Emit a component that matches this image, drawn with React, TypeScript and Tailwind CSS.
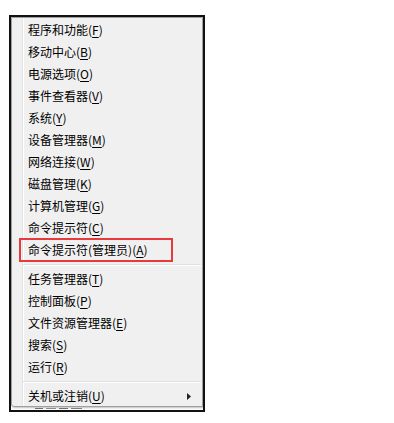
import React from 'react';

type Item = { label: string; key: string; highlight?: boolean; arrow?: boolean };

const groups: Item[][] = [
  [
    { label: '程序和功能', key: 'F' },
    { label: '移动中心', key: 'B' },
    { label: '电源选项', key: 'O' },
    { label: '事件查看器', key: 'V' },
    { label: '系统', key: 'Y' },
    { label: '设备管理器', key: 'M' },
    { label: '网络连接', key: 'W' },
    { label: '磁盘管理', key: 'K' },
    { label: '计算机管理', key: 'G' },
    { label: '命令提示符', key: 'C' },
    { label: '命令提示符(管理员)', key: 'A', highlight: true },
  ],
  [
    { label: '任务管理器', key: 'T' },
    { label: '控制面板', key: 'P' },
    { label: '文件资源管理器', key: 'E' },
    { label: '搜索', key: 'S' },
    { label: '运行', key: 'R' },
  ],
  [{ label: '关机或注销', key: 'U', arrow: true }],
];

const MenuRow: React.FC<{ item: Item }> = ({ item }) => (
  <div className="relative flex items-center h-[22px] pl-[16px] pr-[10px]">
    <span className="text-[12px] leading-[22px] text-black whitespace-nowrap">
      {item.label}(<span className="underline underline-offset-[2px]">{item.key}</span>)
    </span>
    {item.arrow && (
      <svg className="ml-auto mr-[1px]" width="4" height="7" viewBox="0 0 4 7">
        <path d="M0 0 L4 3.5 L0 7 Z" fill="#222" />
      </svg>
    )}
    {item.highlight && (
      <div className="absolute left-[7px] top-[-1px] w-[154px] h-[24px] border-2 border-[#e8393f]" />
    )}
  </div>
);

const Separator = () => (
  <div className="h-[7px] flex flex-col justify-center pl-[11px] pr-[1px]">
    <div className="h-px bg-[#e0e0e0]" />
    <div className="h-px bg-white" />
  </div>
);

export default function App() {
  return (
    <div
      className="w-[394px] h-[423px] bg-white overflow-hidden"
      style={{ fontFamily: '"Microsoft YaHei", "Noto Sans CJK SC", "Liberation Sans", sans-serif' }}
    >
      <div className="ml-[9px] mt-[15px] w-[196px] h-[397px] border-2 border-[#111] bg-white overflow-hidden flex flex-col">
        <div className="relative h-[390px] bg-[#f0f0f0] border border-[#a0a0a0] pt-px rounded-bl-[3px] shadow-[1px_1px_2px_rgba(0,0,0,0.25)]">
          {/* gutter line */}
          <div className="absolute left-[10px] top-0 bottom-0 w-px bg-[#e2e3e3]" />
          <div className="absolute left-[11px] top-0 bottom-0 w-px bg-white" />
          <div className="relative flex flex-col">
            {groups.map((g, gi) => (
              <React.Fragment key={gi}>
                {gi > 0 && <Separator />}
                {g.map((it) => (
                  <MenuRow key={it.label} item={it} />
                ))}
              </React.Fragment>
            ))}
          </div>
        </div>
        {/* sliver of the window behind the menu */}
        <div className="h-[3px] flex items-start gap-[3px] pl-[24px] pt-px">
          <div className="w-[8px] h-px bg-[#777]" />
          <div className="w-[10px] h-px bg-[#999]" />
          <div className="w-[9px] h-px bg-[#777]" />
          <div className="w-[11px] h-px bg-[#888]" />
        </div>
      </div>
    </div>
  );
}
